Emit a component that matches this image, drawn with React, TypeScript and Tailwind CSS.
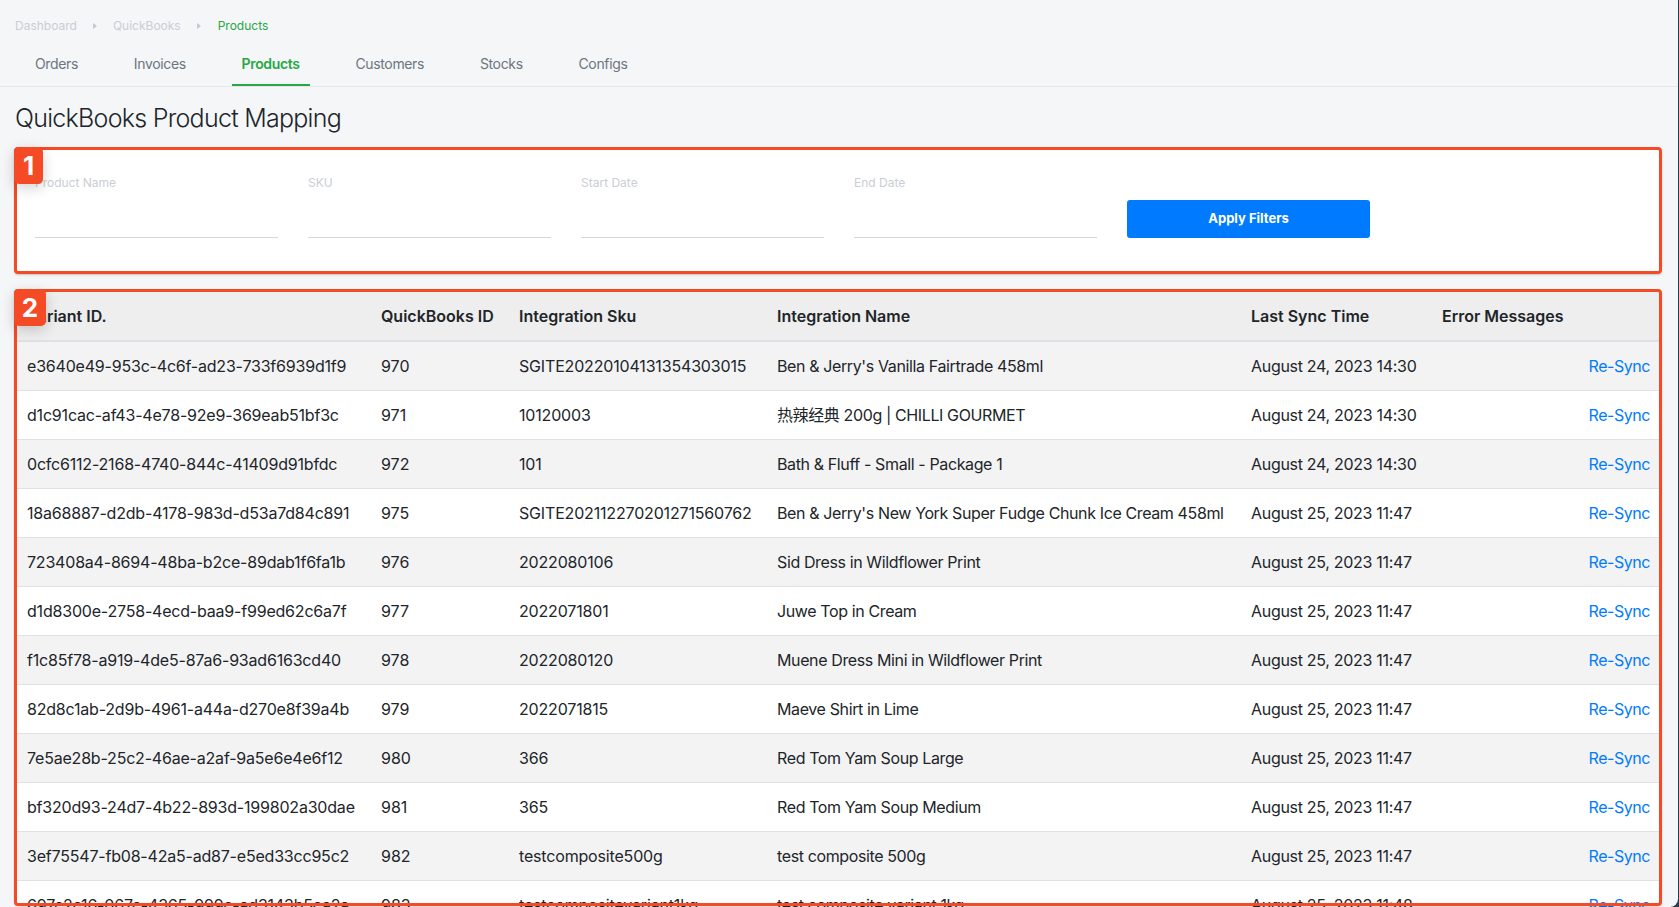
const rows = [
  ["e3640e49-953c-4c6f-ad23-733f6939d1f9", "970", "SGITE20220104131354303015", "Ben & Jerry's Vanilla Fairtrade 458ml", "August 24, 2023 14:30"],
  ["d1c91cac-af43-4e78-92e9-369eab51bf3c", "971", "10120003", "热辣经典 200g | CHILLI GOURMET", "August 24, 2023 14:30"],
  ["0cfc6112-2168-4740-844c-41409d91bfdc", "972", "101", "Bath & Fluff - Small - Package 1", "August 24, 2023 14:30"],
  ["18a68887-d2db-4178-983d-d53a7d84c891", "975", "SGITE202112270201271560762", "Ben & Jerry's New York Super Fudge Chunk Ice Cream 458ml", "August 25, 2023 11:47"],
  ["723408a4-8694-48ba-b2ce-89dab1f6fa1b", "976", "2022080106", "Sid Dress in Wildflower Print", "August 25, 2023 11:47"],
  ["d1d8300e-2758-4ecd-baa9-f99ed62c6a7f", "977", "2022071801", "Juwe Top in Cream", "August 25, 2023 11:47"],
  ["f1c85f78-a919-4de5-87a6-93ad6163cd40", "978", "2022080120", "Muene Dress Mini in Wildflower Print", "August 25, 2023 11:47"],
  ["82d8c1ab-2d9b-4961-a44a-d270e8f39a4b", "979", "2022071815", "Maeve Shirt in Lime", "August 25, 2023 11:47"],
  ["7e5ae28b-25c2-46ae-a2af-9a5e6e4e6f12", "980", "366", "Red Tom Yam Soup Large", "August 25, 2023 11:47"],
  ["bf320d93-24d7-4b22-893d-199802a30dae", "981", "365", "Red Tom Yam Soup Medium", "August 25, 2023 11:47"],
  ["3ef75547-fb08-42a5-ad87-e5ed33cc95c2", "982", "testcomposite500g", "test composite 500g", "August 25, 2023 11:47"],
  ["697c2c16-067c-4365-999c-ad3143b5ca2a", "983", "testcompositevariant1kg", "test composite variant 1kg", "August 25, 2023 11:48"],
];

const tabs = ["Orders", "Invoices", "Products", "Customers", "Stocks", "Configs"];
const filters = ["Product Name", "SKU", "Start Date", "End Date"];
const headers = ["Variant ID.", "QuickBooks ID", "Integration Sku", "Integration Name", "Last Sync Time", "Error Messages", ""];
// the reference font runs a little narrower, per column
const cellTracking = ["tracking-[-0.2px]", "", "tracking-[-0.17px]", "tracking-[-0.38px]", "tracking-[-0.3px]"];

function Arrow() {
  return (
    <svg width="4" height="6" viewBox="0 0 4 6" className="mx-[16px]">
      <polygon points="0,0 4,3 0,6" fill="#c4cad1" />
    </svg>
  );
}

function Marked({ n, badge, className, children }: { n: number; badge: string; className: string; children: React.ReactNode }) {
  return (
    <div className={`relative mx-[14px] w-[1648px] bg-white ${className}`}>
      {children}
      <div className="pointer-events-none absolute inset-0 rounded-[4px] border-[3px] border-[#f54a26] shadow-[0_1px_2px_rgba(0,0,0,0.2)]" />
      <div className={`absolute left-0 top-0 flex items-center justify-center rounded-[5px] bg-[#f54a26] text-[26px] font-bold text-white shadow-[0_4px_14px_rgba(0,0,0,0.18)] ${badge}`}>
        {n}
      </div>
    </div>
  );
}

export default function App() {
  return (
    <div className="h-[907px] overflow-hidden bg-[#2c3a4a] pr-px">
      <div className="h-full overflow-hidden rounded-br-[8px] bg-[#f4f6f8] font-['Inter','Noto_Sans_CJK_SC',sans-serif] text-[#212529]">
        <div className="flex h-[18px] pt-0 mt-[17px] items-center pl-[15px] text-xs text-[#c9ced4]">
          <span>Dashboard</span>
          <Arrow />
          <span>QuickBooks</span>
          <Arrow />
          <span className="ml-px text-[#28a745]">Products</span>
        </div>

        <nav className="mt-[8px] flex h-[44px] gap-[35.8px] border-b border-[#e5e7ea] pl-[25px] text-sm tracking-[-0.35px] text-[#6c757d]">
          {tabs.map((t) => (
            <div
              key={t}
              className={`flex h-[43px] items-center border-b-2 px-[10px] ${t === "Products" ? "border-[#28a745] font-semibold text-[#28a745]" : "border-transparent"}`}
            >
              {t}
            </div>
          ))}
        </nav>

        <h1 className="mt-[16px] mb-[14px] h-[30px] pl-[15px] text-[25px] leading-[30px] font-light tracking-[-0.73px]">QuickBooks Product Mapping</h1>

        <Marked n={1} badge="h-[37px] w-[29px]" className="h-[127px]">
          <div className="flex items-end gap-[30px] pt-[27px] pl-[21px]">
            {filters.map((f) => (
              <label key={f} className="flex w-[243px] flex-col">
                <span className="h-[18px] text-xs leading-[18px] text-[#c9ced4]">{f}</span>
                <input className="mt-[18px] h-[28px] border-b border-[#d5d7da] outline-none" />
              </label>
            ))}
            <button className="h-[38px] w-[243px] rounded-[3px] bg-[#007bff] text-[13px] font-bold text-white">Apply Filters</button>
          </div>
        </Marked>

        <Marked n={2} badge="h-[37px] w-[32px]" className="mt-[15px] h-[617px]">
          <table className="ml-px mt-px w-[1646px] table-fixed border-collapse text-base">
            <colgroup>
              <col className="w-[354px]" />
              <col className="w-[138px]" />
              <col className="w-[258px]" />
              <col className="w-[474px]" />
              <col className="w-[191px]" />
              <col className="w-[111px]" />
              <col className="w-[120px]" />
            </colgroup>
            <thead>
              <tr className="h-[52px] border-b-2 border-[#dee2e6] bg-[#eeeeee]">
                {headers.map((h, i) => (
                  <th key={i} className="px-[12px] pt-[2px] text-left font-semibold whitespace-nowrap">
                    {h}
                  </th>
                ))}
              </tr>
            </thead>
            <tbody>
              {rows.map((r, i) => (
                <tr key={r[0]} className={`h-[49px] border-b border-[#dee2e6] ${i % 2 === 0 ? "bg-[#f3f3f4]" : "bg-white"}`}>
                  {r.map((c, j) => (
                    <td key={j} className={`px-[12px] whitespace-nowrap ${cellTracking[j]}`}>
                      {c}
                    </td>
                  ))}
                  <td className="px-[12px]" />
                  <td className="pr-[11px] pl-[12px] text-right tracking-[-0.45px] text-[#007bff]">Re-Sync</td>
                </tr>
              ))}
            </tbody>
          </table>
        </Marked>
      </div>
    </div>
  );
}
